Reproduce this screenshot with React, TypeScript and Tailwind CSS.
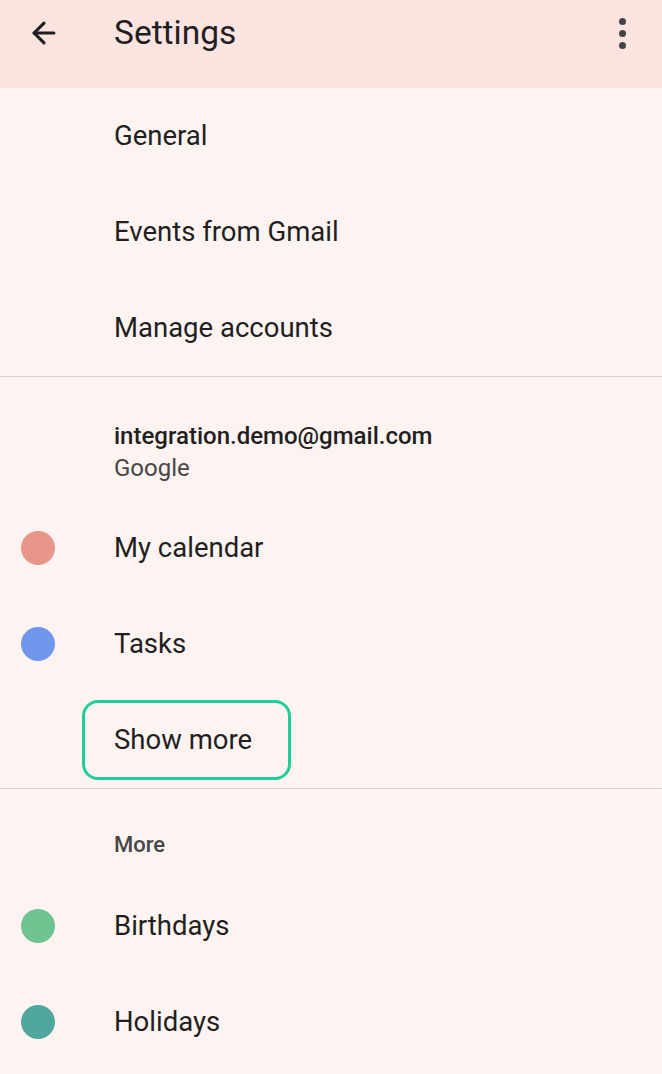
import { ArrowLeft } from 'lucide-react'

type Cal = { name: string; color: string }

const myCals: Cal[] = [
  { name: 'My calendar', color: 'bg-[#e8958a]' },
  { name: 'Tasks', color: 'bg-[#7097ec]' },
]

const moreCals: Cal[] = [
  { name: 'Birthdays', color: 'bg-[#6fc491]' },
  { name: 'Holidays', color: 'bg-[#4fa79d]' },
]

function Row({ label, dot }: { label: string; dot?: string }) {
  return (
    <div className="flex h-[96px] items-center">
      <div className="flex w-[114px] items-center pl-[21px]">
        {dot && <span className={`h-[34px] w-[34px] rounded-full ${dot}`} />}
      </div>
      <span className="text-[27.5px] text-[#1f1f1f]">{label}</span>
    </div>
  )
}

export default function App() {
  return (
    <div
      className="min-h-[1074px] w-full bg-[#fdf3f1]"
      style={{ fontFamily: 'Roboto, "Noto Sans", sans-serif' }}
    >
      {/* app bar */}
      <header className="flex h-[88px] items-center bg-[#fbe3e0] pb-[22px]">
        <div className="flex w-[114px] items-center pl-[27px]">
          <ArrowLeft size={34} strokeWidth={2.2} className="text-[#1f1f1f]" />
        </div>
        <h1 className="flex-1 text-[33.5px] text-[#1f1f1f]">Settings</h1>
        <div className="flex flex-col items-center gap-[5px] pr-[36px]">
          <span className="h-[7px] w-[7px] rounded-full bg-[#444]" />
          <span className="h-[7px] w-[7px] rounded-full bg-[#444]" />
          <span className="h-[7px] w-[7px] rounded-full bg-[#444]" />
        </div>
      </header>

      <Row label="General" />
      <Row label="Events from Gmail" />
      <Row label="Manage accounts" />

      <div className="h-px bg-[#dcd3d1]" />

      <div className="flex h-[123px] flex-col pl-[114px] pt-[43px]">
        <span className="text-[24px] leading-[32px] font-medium text-[#1f1f1f]">
          integration.demo@gmail.com
        </span>
        <span className="text-[24px] leading-[32px] text-[#474747]">Google</span>
      </div>

      {myCals.map((c) => (
        <Row key={c.name} label={c.name} dot={c.color} />
      ))}

      <div className="flex h-[96px] items-center pl-[82px]">
        <div className="flex h-[80px] items-center rounded-[16px] border-[3px] border-[#1fcf98] pr-[36px] pl-[29px]">
          <span className="text-[27.5px] text-[#1f1f1f]">Show more</span>
        </div>
      </div>

      <div className="h-px bg-[#dcd3d1]" />

      <div className="flex h-[89px] items-end pb-[17px] pl-[114px]">
        <span className="text-[22px] font-medium text-[#474747]">More</span>
      </div>

      {moreCals.map((c) => (
        <Row key={c.name} label={c.name} dot={c.color} />
      ))}
    </div>
  )
}
